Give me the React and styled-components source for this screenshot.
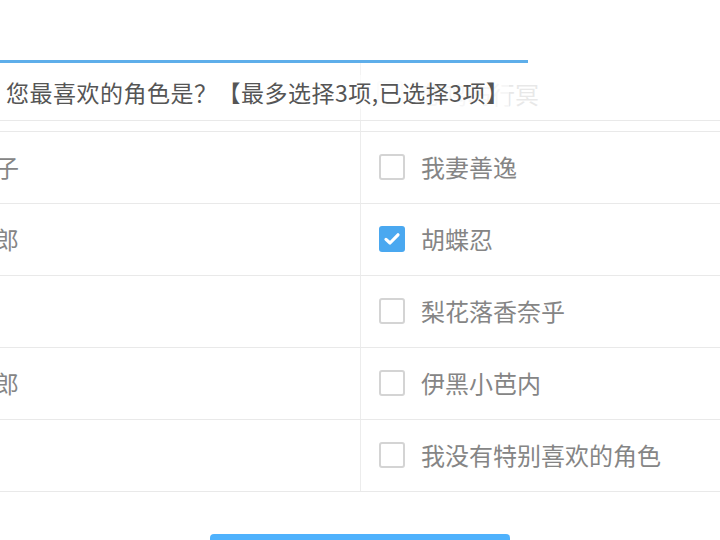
import React from "react";
import styled, { createGlobalStyle } from "styled-components";

const Global = createGlobalStyle`
  html, body {
    margin: 0;
    padding: 0;
    width: 720px;
    height: 540px;
    overflow: hidden;
    background: #ffffff;
  }
  body {
    font-family: "Noto Sans CJK SC", "Noto Sans", sans-serif;
  }
`;

const Page = styled.div`
  width: 720px;
  height: 540px;
  overflow: hidden;
  padding-top: 60px;
  box-sizing: border-box;
`;

const Progress = styled.div`
  width: 528px;
  height: 3px;
  background: #5eaeea;
`;

const Header = styled.div`
  position: relative;
  height: 57px;
  display: flex;
  align-items: center;
  padding-left: 6px;
  box-sizing: border-box;
`;

const Title = styled.h2`
  position: relative;
  z-index: 1;
  margin: 0;
  font-size: 23px;
  font-weight: 400;
  color: #555555;
  white-space: nowrap;
  letter-spacing: 0.5px;
  background: rgba(255, 255, 255, 0.6);
`;

const Ghost = styled.div`
  position: absolute;
  left: 377px;
  top: 13px;
  display: flex;
  align-items: center;
  gap: 16px;
  opacity: 0.16;
  font-size: 24px;
  color: #777;
`;

const GhostDivider = styled.div`
  position: absolute;
  left: 360px;
  top: 0;
  bottom: 0;
  width: 1px;
  background: #f3f3f3;
`;

const Table = styled.div`
  margin-left: -161px;
  width: 1043px;
  display: grid;
  grid-template-columns: 522px 521px;
  border-top: 1px solid #e9e9e9;
  border-bottom: 1px solid #e9e9e9;
`;

const Cell = styled.label`
  box-sizing: border-box;
  height: ${(p) => (p.$short ? "10px" : "72px")};
  display: flex;
  align-items: center;
  gap: 16px;
  padding-left: 18px;
  padding-bottom: ${(p) => (p.$short ? "0" : "2px")};
  border-top: ${(p) => (p.$first ? "none" : "1px solid #e9e9e9")};
  border-right: ${(p) => (p.$left ? "1px solid #ececec" : "none")};
  font-size: 24px;
  color: #858585;
  white-space: nowrap;
  overflow: hidden;
`;

const Box = styled.span`
  flex: none;
  width: 26px;
  height: 26px;
  box-sizing: border-box;
  border-radius: 3px;
  border: ${(p) => (p.$checked ? "none" : "2px solid #d4d4d4")};
  background: ${(p) => (p.$checked ? "#4aa8f0" : "#ffffff")};
  display: flex;
  align-items: center;
  justify-content: center;
`;

const Footer = styled.div`
  padding-top: 42px;
  padding-left: 210px;
`;

const Submit = styled.button`
  width: 300px;
  height: 48px;
  border: none;
  border-radius: 4px;
  background: #4fb2fd;
  color: #fff;
  font-size: 20px;
  font-family: inherit;
`;

const Check = () => (
  <svg width="18" height="16" viewBox="0 0 18 16">
    <path
      d="M3 8.4 L7 12 L15 3.8"
      fill="none"
      stroke="#ffffff"
      strokeWidth="3.2"
      strokeLinecap="round"
      strokeLinejoin="round"
    />
  </svg>
);

const Option = ({ label, checked, left, first, short }) => (
  <Cell $left={left} $first={first} $short={short}>
    {!short && (
      <>
        <Box $checked={checked}>{checked && <Check />}</Box>
        <span>{label}</span>
      </>
    )}
  </Cell>
);

const rows = [
  ["灶门祢豆子", false, "我妻善逸", false],
  ["灶门炭治郎", true, "胡蝶忍", true],
  ["富冈义勇", false, "梨花落香奈乎", false],
  ["炼狱杏寿郎", true, "伊黑小芭内", false],
  ["宇髓天元", false, "我没有特别喜欢的角色", false],
];

export default function App() {
  return (
    <Page>
      <Global />
      <Progress />
      <Header>
        <GhostDivider />
        <Ghost>
          <Box />
          <span>悲鸣屿行冥</span>
        </Ghost>
        <Title>您最喜欢的角色是？【最多选择3项,已选择3项】</Title>
      </Header>
      <Table>
        <Option left first short />
        <Option first short />
        {rows.map(([l, lc, r, rc]) => (
          <React.Fragment key={r}>
            <Option label={l} checked={lc} left />
            <Option label={r} checked={rc} />
          </React.Fragment>
        ))}
      </Table>
      <Footer>
        <Submit>提交</Submit>
      </Footer>
    </Page>
  );
}
